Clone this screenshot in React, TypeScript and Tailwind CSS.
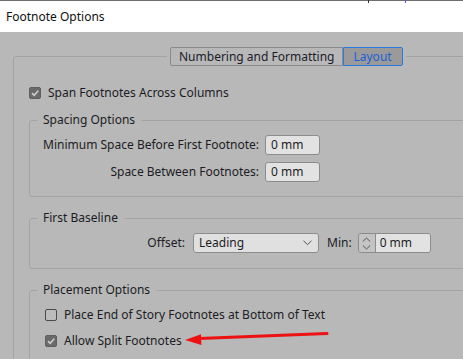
import type { ReactNode } from "react";

const font = { fontFamily: '"Noto Sans", "Open Sans", Arial, sans-serif' };

function Check({ checked }: { checked: boolean }) {
  if (!checked) {
    return <span className="w-[12px] h-[12px] shrink-0 rounded-[2px] border border-[#4a4a4a] bg-[#bcbcbc]" />;
  }
  return (
    <span className="w-[12px] h-[12px] shrink-0 rounded-[2px] bg-[#6a6a6a] border border-[#5e5e5e] flex items-center justify-center">
      <svg width="10" height="10" viewBox="0 0 10 10">
        <path d="M2 5.2 L4.2 7.3 L8.2 2.8" fill="none" stroke="#cfcfcf" strokeWidth="1.6" />
      </svg>
    </span>
  );
}

function Group({ title, children, className }: { title: string; children: ReactNode; className?: string }) {
  return (
    <fieldset className={`border border-[#a4a4a4] rounded-[3px] w-[480px] pl-[1px] ${className ?? ""}`}>
      <legend className="ml-[6px] px-[6px] h-[16px] leading-[16px]">{title}</legend>
      {children}
    </fieldset>
  );
}

function TextBox({ value, w = "w-[55px]" }: { value: string; w?: string }) {
  return (
    <div className={`${w} h-[20px] rounded-[3px] border border-[#8c8c8c] bg-[#e2e2e2] pl-[5px] leading-[18px]`}>{value}</div>
  );
}

export default function App() {
  return (
    <div
      className="relative w-[463px] h-[359px] overflow-hidden bg-[#b8b8b8] text-[12px] text-[#1c1c24]"
      style={font}
    >
      {/* title bar */}
      <div className="h-[32px] bg-white border-t border-[#6e6e6e] flex items-center pl-[6px] text-[#111]">
        Footnote Options
      </div>
      <div className="absolute left-[368px] top-0 w-[1px] h-[3px] bg-[#333]" />
      <div className="absolute left-[405px] top-0 w-[1px] h-[3px] bg-[#7a45d8]" />

      {/* body */}
      <div className="pt-[15px] pl-[13px]">
        <fieldset className="border border-[#a4a4a4] rounded-[3px] w-[520px] h-[400px] pl-[15px]">
          <legend className="ml-[138px] px-[3px]">
            <div className="flex h-[19px]">
              <div className="h-[19px] px-[8px] border border-[#8a8a8a] rounded-l-[2px] leading-[17px] text-[#1c1c2c]">
                Numbering and Formatting
              </div>
              <div className="h-[19px] w-[60px] pl-[9px] border border-[#2a7ae2] rounded-r-[2px] bg-[#9a9a9a] leading-[17px] text-[#1f5fd4]">
                Layout
              </div>
            </div>
          </legend>

          <div className="flex items-center gap-[7px] h-[20px] mt-[17px]">
            <Check checked />
            <span>Span Footnotes Across Columns</span>
          </div>

          <Group title="Spacing Options" className="mt-[9px]">
            <div className="grid grid-cols-[228px_55px] gap-x-[6px] gap-y-[7px] items-center pt-[7px] pb-[14px]">
              <span className="text-right whitespace-nowrap">Minimum Space Before First Footnote:</span>
              <TextBox value="0 mm" />
              <span className="text-right whitespace-nowrap">Space Between Footnotes:</span>
              <TextBox value="0 mm" />
            </div>
          </Group>

          <Group title="First Baseline" className="mt-[13px]">
            <div className="flex items-center pt-[7px] pb-[15px]">
              <span className="w-[154px] text-right">Offset:</span>
              <div className="ml-[8px] w-[126px] h-[20px] rounded-[3px] border border-[#8c8c8c] bg-[#e0e0e0] pl-[5px] pr-[6px] flex items-center justify-between">
                <span>Leading</span>
                <svg width="9" height="6" viewBox="0 0 9 6">
                  <path d="M0.5 0.8 L4.5 4.6 L8.5 0.8" fill="none" stroke="#555" strokeWidth="1" />
                </svg>
              </div>
              <span className="ml-[8px]">Min:</span>
              <div className="ml-[6px] w-[73px] h-[20px] rounded-[3px] border border-[#8c8c8c] flex overflow-hidden">
                <div className="w-[17px] bg-[#c4c4c4] border-r border-[#8c8c8c] flex flex-col items-center justify-center gap-[3px]">
                  <svg width="9" height="5" viewBox="0 0 9 5">
                    <path d="M0.8 4.5 L4.5 1 L8.2 4.5" fill="none" stroke="#555" strokeWidth="1" />
                  </svg>
                  <svg width="9" height="5" viewBox="0 0 9 5">
                    <path d="M0.8 0.5 L4.5 4 L8.2 0.5" fill="none" stroke="#555" strokeWidth="1" />
                  </svg>
                </div>
                <div className="flex-1 bg-[#e2e2e2] pl-[4px] leading-[18px]">0 mm</div>
              </div>
            </div>
          </Group>

          <Group title="Placement Options" className="mt-[13px]">
            <div className="flex flex-col gap-[6px] pt-[7px] pl-[14px] pb-[20px]">
              <div className="flex items-center gap-[7px] h-[20px]">
                <Check checked={false} />
                <span>Place End of Story Footnotes at Bottom of Text</span>
              </div>
              <div className="flex items-center gap-[7px] h-[20px]">
                <Check checked />
                <span>Allow Split Footnotes</span>
              </div>
            </div>
          </Group>
        </fieldset>
      </div>

      {/* red annotation arrow */}
      <svg className="absolute left-0 top-0" width="463" height="359" viewBox="0 0 463 359">
        <path d="M199 338.5 L327 333.6" stroke="#ee1111" strokeWidth="3" strokeLinecap="round" />
        <path d="M185 340 L201 334.2 L201.4 345 Z" fill="#ee1111" />
      </svg>
    </div>
  );
}
